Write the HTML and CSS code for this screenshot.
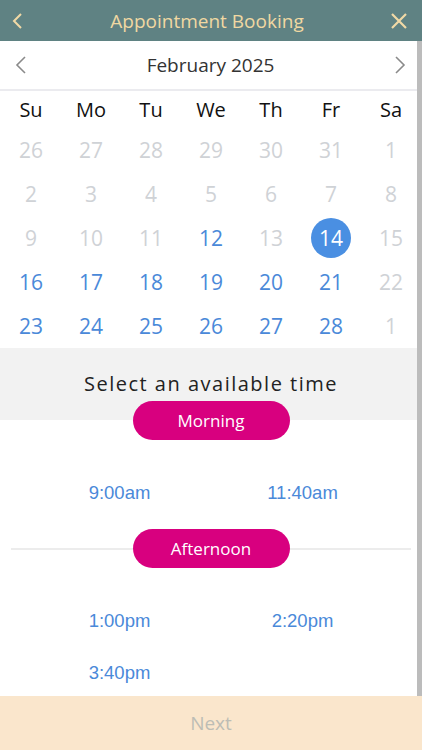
FILE: index.html
```html
<!DOCTYPE html>
<html lang="en">
<head>
  <meta charset="UTF-8" />
  <title>Appointment Booking</title>
  <meta name="viewport" content="width=device-width, initial-scale=1.0" />
  <link rel="stylesheet" href="styles.css">
</head>
<body>
  <header class="topbar">
    <a class="topbar-btn" href="#">
      <svg width="14" height="18" viewBox="0 0 14 18"><path d="M11 2 L4 9 L11 16" fill="none" stroke="#f1d9a6" stroke-width="2"/></svg>
    </a>
    <h1>Appointment Booking</h1>
    <a class="topbar-btn" href="#">
      <svg width="18" height="18" viewBox="0 0 18 18"><path d="M2 2 L16 16 M16 2 L2 16" fill="none" stroke="#f1d9a6" stroke-width="2.2"/></svg>
    </a>
  </header>

  <main class="conteudo">
    <div class="mes">
      <svg width="12" height="20" viewBox="0 0 12 20"><path d="M10 2 L2 10 L10 18" fill="none" stroke="#8a8a8a" stroke-width="1.6"/></svg>
      <span>February 2025</span>
      <svg width="12" height="20" viewBox="0 0 12 20"><path d="M2 2 L10 10 L2 18" fill="none" stroke="#8a8a8a" stroke-width="1.6"/></svg>
    </div>

    <div class="calendario">
      <div class="dia-semana">Su</div><div class="dia-semana">Mo</div><div class="dia-semana">Tu</div><div class="dia-semana">We</div><div class="dia-semana">Th</div><div class="dia-semana">Fr</div><div class="dia-semana">Sa</div>

      <div class="dia off">26</div><div class="dia off">27</div><div class="dia off">28</div><div class="dia off">29</div><div class="dia off">30</div><div class="dia off">31</div><div class="dia off">1</div>
      <div class="dia off">2</div><div class="dia off">3</div><div class="dia off">4</div><div class="dia off">5</div><div class="dia off">6</div><div class="dia off">7</div><div class="dia off">8</div>
      <div class="dia off">9</div><div class="dia off">10</div><div class="dia off">11</div><div class="dia">12</div><div class="dia off">13</div><div class="dia"><span class="selecionado">14</span></div><div class="dia off">15</div>
      <div class="dia">16</div><div class="dia">17</div><div class="dia">18</div><div class="dia">19</div><div class="dia">20</div><div class="dia">21</div><div class="dia off">22</div>
      <div class="dia">23</div><div class="dia">24</div><div class="dia">25</div><div class="dia">26</div><div class="dia">27</div><div class="dia">28</div><div class="dia off">1</div>
    </div>

    <div class="faixa">Select an available time</div>

    <div class="periodo primeiro">
      <span class="pill">Morning</span>
    </div>
    <div class="horarios">
      <a href="#">9:00am</a>
      <a href="#">11:40am</a>
    </div>

    <div class="periodo divisor">
      <span class="linha"></span>
      <span class="pill">Afternoon</span>
      <span class="linha"></span>
    </div>
    <div class="horarios">
      <a href="#">1:00pm</a>
      <a href="#">2:20pm</a>
      <a href="#">3:40pm</a>
    </div>

    <div class="scrollbar"></div>
  </main>

  <footer class="rodape">Next</footer>
</body>
</html>
```

FILE: styles.css
```css
body {
  margin: 0;
  font-family: "Open Sans", Arial, sans-serif;
  background: #fff;
  height: 750px;
  display: flex;
  flex-direction: column;
  overflow: hidden;
}
.topbar {
  background: #5f8283;
  height: 41px;
  display: flex;
  align-items: center;
  justify-content: space-between;
  padding: 0 14px 0 10px;
}
.topbar h1 {
  margin: 0;
  font-size: 19px;
  font-weight: normal;
  color: #f0d8a2;
}
.topbar-btn { display: flex; }

.conteudo {
  flex: 1;
  position: relative;
  overflow: hidden;
}
.mes {
  height: 48px;
  display: flex;
  align-items: center;
  justify-content: space-between;
  padding: 0 16px 0 15px;
  border-bottom: 2px solid #ebebef;
  font-size: 19px;
  color: #333;
}
.calendario {
  display: grid;
  grid-template-columns: repeat(7, 60px);
  padding: 0 1px;
}
.dia-semana {
  height: 37px;
  display: flex;
  align-items: center;
  justify-content: center;
  font-size: 20px;
  color: #111;
}
.dia {
  height: 44px;
  display: flex;
  align-items: center;
  justify-content: center;
  font-size: 21px;
  color: #4a89d9;
}
.dia.off { color: #cfd2d6; }
.selecionado {
  width: 40px;
  height: 40px;
  border-radius: 50%;
  background: #4a8fe2;
  color: #fff;
  display: flex;
  align-items: center;
  justify-content: center;
}
.faixa {
  height: 72px;
  line-height: 72px;
  background: #f2f2f2;
  text-align: center;
  font-size: 20px;
  letter-spacing: 1.5px;
  color: #222;
}
.periodo {
  display: flex;
  align-items: center;
  justify-content: center;
}
.periodo.primeiro { margin-top: -19px; }
.periodo.divisor { margin: 10px 11px 0; }
.linha {
  flex: 1;
  height: 2px;
  background: #ececec;
}
.pill {
  width: 157px;
  height: 39px;
  border-radius: 20px;
  background: #d8007f;
  color: #fff;
  font-size: 17px;
  display: flex;
  align-items: center;
  justify-content: center;
}
.horarios {
  display: grid;
  grid-template-columns: 183px 183px;
  justify-content: center;
  margin-top: 27px;
}
.horarios a {
  height: 52px;
  display: flex;
  align-items: center;
  justify-content: center;
  font-family: "Liberation Sans", Arial, sans-serif;
  font-size: 18.5px;
  color: #4a89d9;
  text-decoration: none;
}
.scrollbar {
  position: absolute;
  top: 0;
  right: 0;
  width: 5px;
  height: 100%;
  background: #bcbcbc;
}
.rodape {
  height: 54px;
  background: #fae6cc;
  display: flex;
  align-items: center;
  justify-content: center;
  font-size: 19px;
  color: #bdbdb5;
}
```
